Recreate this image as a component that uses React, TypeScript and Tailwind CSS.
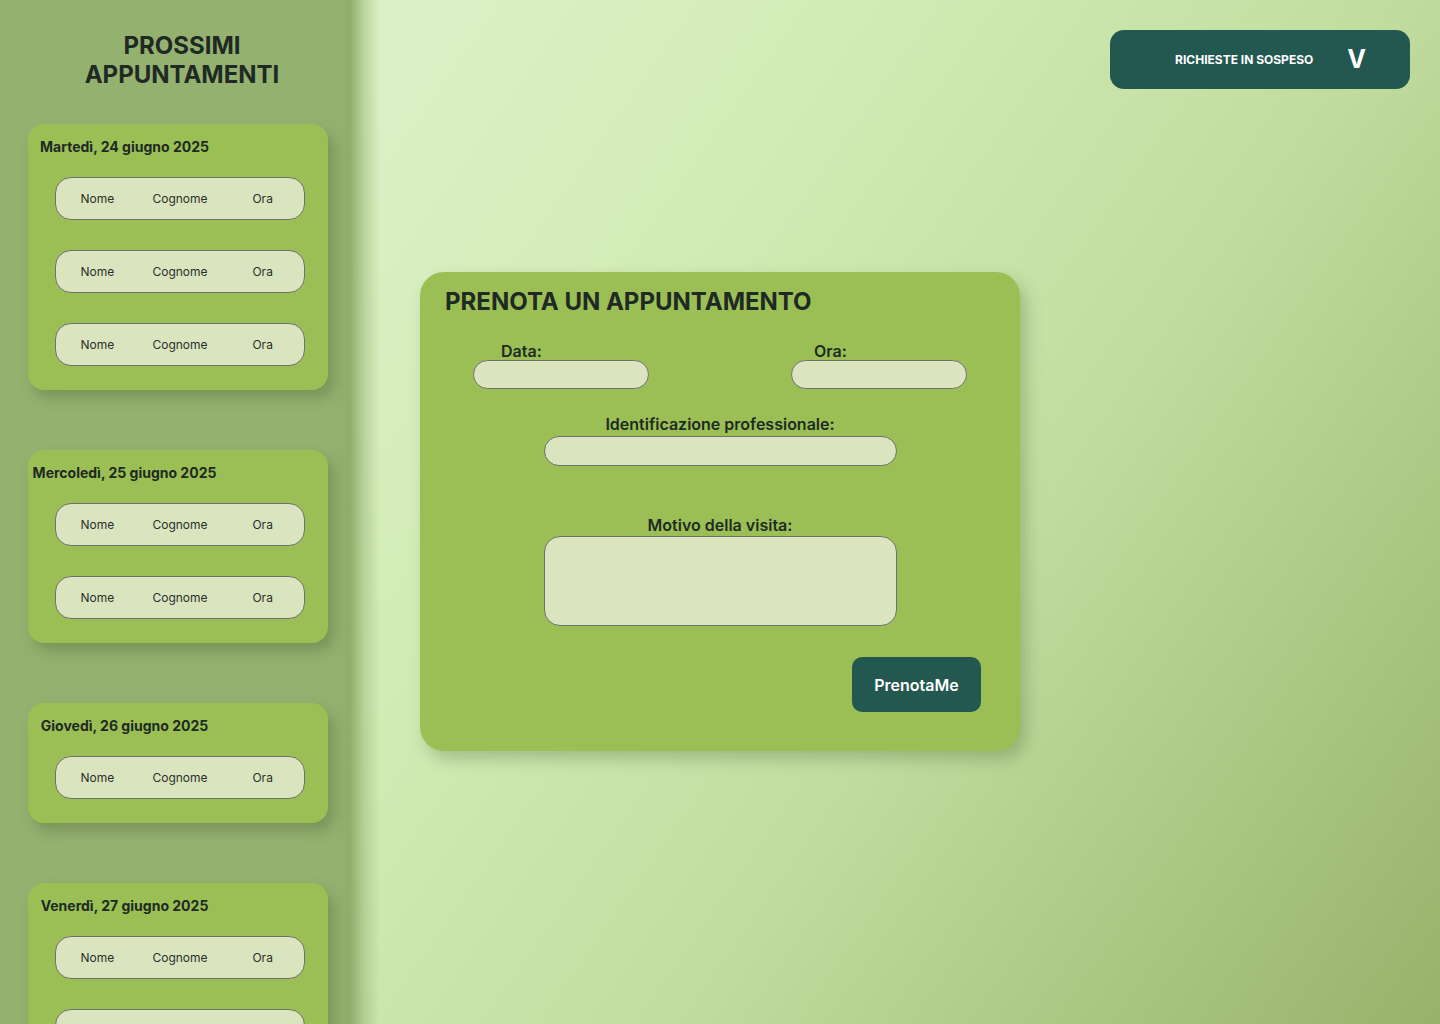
import React from "react";

const days: { title: string; count: number }[] = [
  { title: "Martedì, 24 giugno 2025", count: 3 },
  { title: "Mercoledì, 25 giugno 2025", count: 2 },
  { title: "Giovedì, 26 giugno 2025", count: 1 },
  { title: "Venerdì, 27 giugno 2025", count: 2 },
];

function Pill() {
  return (
    <div className="w-[250px] h-[43px] rounded-[16px] border border-[#707070] bg-[#dae5c0] grid grid-cols-3 items-center text-center text-[12px] text-[#2b2f2b]">
      <span>Nome</span>
      <span>Cognome</span>
      <span>Ora</span>
    </div>
  );
}

function DayCard({ title, count }: { title: string; count: number }) {
  return (
    <div className="w-[300px] shrink-0 rounded-[16px] bg-[#9bbf55] shadow-[6px_8px_14px_rgba(90,110,60,0.45)] pt-[14px] pb-[24px]">
      <div className="w-[193px] text-center text-[14px] font-bold leading-[18px] text-[#1e2a23] whitespace-nowrap">
        {title}
      </div>
      <div className="mt-[21px] flex flex-col gap-[30px] pl-[27px]">
        {Array.from({ length: count }).map((_, i) => (
          <Pill key={i} />
        ))}
      </div>
    </div>
  );
}

export default function App() {
  return (
    <div
      className="flex w-[1440px] h-[1024px] overflow-hidden bg-[linear-gradient(125deg,#e4f3d4_0%,#d3ecb6_40%,#c0dd9e_65%,#98b26b_100%)]"
      style={{ fontFamily: "Inter, 'Noto Sans', sans-serif" }}
    >
      <aside className="relative z-10 w-[380px] shrink-0 h-[1024px] overflow-hidden bg-[linear-gradient(to_right,#95b170_0px,#95b170_336px,#91ae6c_350px,rgba(149,177,112,0.45)_364px,rgba(149,177,112,0)_380px)]">
        <h1 className="w-[364px] pt-[31px] text-center text-[24px] font-bold leading-[29px] text-[#1e2a23]">
          PROSSIMI
          <br />
          APPUNTAMENTI
        </h1>
        <div className="mt-[35px] pl-[28px] flex flex-col gap-[60px]">
          {days.map((d) => (
            <DayCard key={d.title} title={d.title} count={d.count} />
          ))}
        </div>
      </aside>

      <main className="flex-1 flex flex-col">
        <div className="flex justify-end pt-[30px] pr-[30px]">
          <button className="w-[300px] h-[59px] rounded-[14px] bg-[#235850] flex items-center justify-center gap-[34px] pl-[21px] text-white">
            <span className="text-[12px] font-bold">RICHIESTE IN SOSPESO</span>
            <span className="text-[25px] font-bold leading-none">V</span>
          </button>
        </div>

        <div className="ml-[40px] mt-[183px] w-[600px] h-[479px] rounded-[24px] bg-[#9bbf55] shadow-[6px_8px_16px_rgba(90,110,60,0.35)] px-[25px] pt-[16px]">
          <h2 className="text-[24px] font-bold leading-[28px] text-[#1e2a23]">PRENOTA UN APPUNTAMENTO</h2>

          <div className="mt-[27px] flex justify-between px-[28px]">
            <div className="flex flex-col">
              <label className="pl-[28px] text-[16px] font-semibold leading-[16px] text-[#1e2a23]">Data:</label>
              <div className="mt-[1px] w-[176px] h-[29px] rounded-[15px] border border-[#707070] bg-[#dae5c0]" />
            </div>
            <div className="flex flex-col">
              <label className="pl-[23px] text-[16px] font-semibold leading-[16px] text-[#1e2a23]">Ora:</label>
              <div className="mt-[1px] w-[176px] h-[29px] rounded-[15px] border border-[#707070] bg-[#dae5c0]" />
            </div>
          </div>

          <div className="mt-[27px] flex flex-col items-center">
            <label className="text-[16px] font-semibold leading-[16px] text-[#1e2a23]">Identificazione professionale:</label>
            <div className="mt-[4px] w-[353px] h-[30px] rounded-[15px] border border-[#707070] bg-[#dae5c0]" />
          </div>

          <div className="mt-[51px] flex flex-col items-center">
            <label className="text-[16px] font-semibold leading-[16px] text-[#1e2a23]">Motivo della visita:</label>
            <div className="mt-[3px] w-[353px] h-[90px] rounded-[16px] border border-[#707070] bg-[#dae5c0]" />
          </div>

          <div className="mt-[31px] flex justify-end pr-[14px]">
            <button className="w-[129px] h-[55px] rounded-[10px] bg-[#235850] text-white text-[16px] font-semibold">
              PrenotaMe
            </button>
          </div>
        </div>
      </main>
    </div>
  );
}
